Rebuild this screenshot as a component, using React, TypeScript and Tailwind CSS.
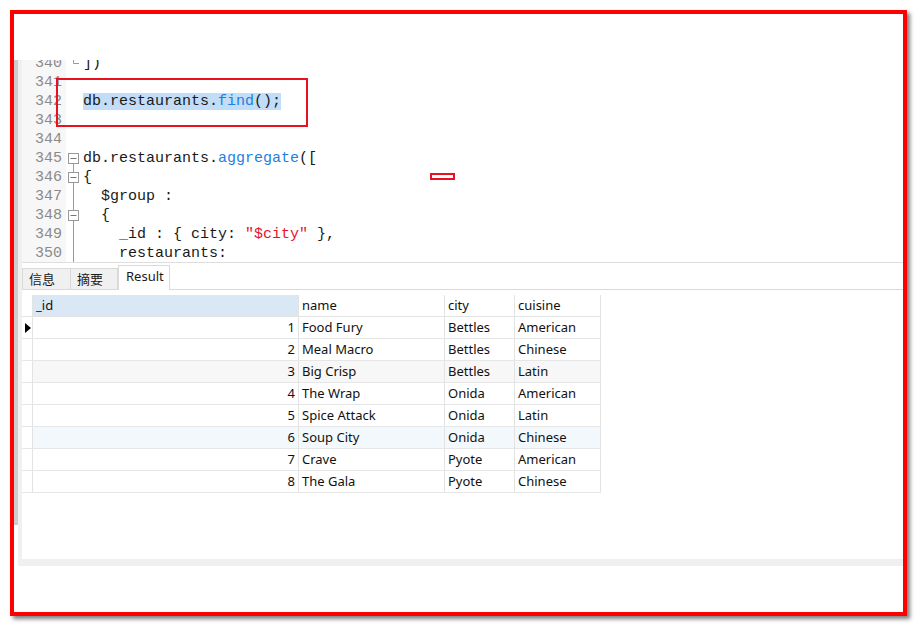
import React from 'react'

const mono = { fontFamily: '"Liberation Mono", "DejaVu Sans Mono", monospace' }
const ui = { fontFamily: '"Noto Sans", "Noto Sans CJK SC", sans-serif' }

type Fold = 'none' | 'end' | 'box' | 'boxTop' | 'line'

function FoldMark({ kind }: { kind: Fold }) {
  return (
    <svg width="17" height="19" className="block">
      {kind === 'end' && <path d="M7.5 0 V9.5 H13" stroke="#999" fill="none" />}
      {kind === 'line' && <path d="M7.5 0 V19" stroke="#999" fill="none" />}
      {(kind === 'box' || kind === 'boxTop') && (
        <>
          {kind === 'boxTop' && <path d="M7.5 0 V4" stroke="#999" fill="none" />}
          <path d="M7.5 14 V19" stroke="#999" fill="none" />
          <rect x="2.5" y="4.5" width="10" height="10" fill="#fff" stroke="#999" />
          <path d="M4.5 9.5 H10.5" stroke="#777" />
        </>
      )}
    </svg>
  )
}

const lines: { n: number; fold: Fold; code: React.ReactNode }[] = [
  { n: 340, fold: 'end', code: <span>])</span> },
  { n: 341, fold: 'none', code: null },
  {
    n: 342,
    fold: 'none',
    code: (
      <span className="bg-[#c2ddf8]">
        db.restaurants.<span className="text-[#1e7fe0]">find</span>();
      </span>
    ),
  },
  { n: 343, fold: 'none', code: null },
  { n: 344, fold: 'none', code: null },
  {
    n: 345,
    fold: 'box',
    code: (
      <span>
        db.restaurants.<span className="text-[#1e7fe0]">aggregate</span>([
      </span>
    ),
  },
  { n: 346, fold: 'boxTop', code: <span>{'{'}</span> },
  { n: 347, fold: 'line', code: <span>{'  $group :'}</span> },
  { n: 348, fold: 'boxTop', code: <span>{'  {'}</span> },
  {
    n: 349,
    fold: 'line',
    code: (
      <span>
        {'    _id : { city: '}
        <span className="text-[#e8112d]">"$city"</span>
        {' },'}
      </span>
    ),
  },
  { n: 350, fold: 'line', code: <span>{'    restaurants:'}</span> },
]

const rows = [
  [1, 'Food Fury', 'Bettles', 'American'],
  [2, 'Meal Macro', 'Bettles', 'Chinese'],
  [3, 'Big Crisp', 'Bettles', 'Latin'],
  [4, 'The Wrap', 'Onida', 'American'],
  [5, 'Spice Attack', 'Onida', 'Latin'],
  [6, 'Soup City', 'Onida', 'Chinese'],
  [7, 'Crave', 'Pyote', 'American'],
  [8, 'The Gala', 'Pyote', 'Chinese'],
]

function rowBg(i: number) {
  if (i === 2) return 'bg-[#f7f7f7]'
  if (i === 5) return 'bg-[#f3f8fd]'
  return 'bg-white'
}

export default function App() {
  return (
    <div className="w-[918px] h-[627px] bg-white overflow-hidden pt-[10px] pl-[10px]">
      <div className="relative w-[897px] h-[606px] border-4 border-[#ff0000] bg-white shadow-[3px_3px_4px_rgba(0,0,0,0.5)] flex flex-col">
        <div className="h-[46px]" />
        <div className="h-[506px] flex">
          <div className="w-[4px] flex flex-col">
            <div className="h-[465px] bg-[#cdcdcd]" />
          </div>
          <div className="w-[4px] bg-[#f0f0f0]" />
          <div className="flex-1 flex flex-col min-w-0">
            {/* editor */}
            <div className="h-[202px] overflow-hidden flex text-[15px] leading-[19px]" style={mono}>
              <div className="w-[44px] bg-[#f7f7f7] text-right pr-[4px] text-[#8a8a8a] -mt-[6px]">
                {lines.map((l) => (
                  <div key={l.n} className="h-[19px]">{l.n}</div>
                ))}
              </div>
              <div className="w-[17px] -mt-[6px]">
                {lines.map((l) => (
                  <FoldMark key={l.n} kind={l.fold} />
                ))}
              </div>
              <div className="flex-1 -mt-[6px] text-[#1a1a1a] whitespace-pre">
                {lines.map((l) => (
                  <div key={l.n} className="h-[19px]">{l.code}</div>
                ))}
              </div>
            </div>
            {/* tabs */}
            <div className="h-[28px] border-t border-[#dedede] flex items-end text-[13px] text-[#1a1a1a]" style={ui}>
              <div className="w-[49px] h-[22px] bg-[#f0f0f0] border border-[#d9d9d9] pl-[6px] leading-[20px]">信息</div>
              <div className="w-[47px] h-[22px] bg-[#f0f0f0] border border-l-0 border-[#d9d9d9] pl-[6px] leading-[20px]">摘要</div>
              <div className="w-[52px] h-[25px] bg-white border border-b-0 border-[#d9d9d9] pl-[7px] leading-[21px]">Result</div>
              <div className="flex-1 border-b border-[#d9d9d9]" />
            </div>
            {/* grid */}
            <div className="flex-1 pt-[5px] text-[13px] text-[#111]" style={ui}>
              <div className="w-[579px]">
                <div className="flex h-[22px] leading-[21px] border-b border-[#e3e3e3]">
                  <div className="w-[11px] border-r border-[#e3e3e3]" />
                  <div className="w-[266px] bg-[#dae8f5] pl-[3px] border-r border-[#e3e3e3]">_id</div>
                  <div className="w-[146px] pl-[3px] border-r border-[#e3e3e3]">name</div>
                  <div className="w-[70px] pl-[3px] border-r border-[#e3e3e3]">city</div>
                  <div className="w-[86px] pl-[3px] border-r border-[#e3e3e3]">cuisine</div>
                </div>
                {rows.map((r, i) => (
                  <div key={i} className={`flex h-[22px] leading-[21px] border-b border-[#e6e6e6] ${rowBg(i)}`}>
                    <div className="w-[11px] bg-white border-r border-[#e3e3e3] flex items-center">
                      {i === 0 && (
                        <svg width="8" height="12" className="ml-[2px]">
                          <path d="M1 1 L7 6 L1 11 Z" fill="#000" />
                        </svg>
                      )}
                    </div>
                    <div className="w-[266px] text-right pr-[3px] border-r border-[#e3e3e3]">{r[0]}</div>
                    <div className="w-[146px] pl-[3px] border-r border-[#e3e3e3]">{r[1]}</div>
                    <div className="w-[70px] pl-[3px] border-r border-[#e3e3e3]">{r[2]}</div>
                    <div className="w-[86px] pl-[3px] border-r border-[#e3e3e3]">{r[3]}</div>
                  </div>
                ))}
              </div>
            </div>
            <div className="h-[7px] bg-[#f0f0f0]" />
          </div>
        </div>

        {/* annotations */}
        <div className="absolute left-[42px] top-[64px] w-[252px] h-[49px] border-2 border-[#e81123]" />
        <div className="absolute left-[416px] top-[159px] w-[25px] h-[7px] border-2 border-[#e81123]" />
      </div>
    </div>
  )
}
